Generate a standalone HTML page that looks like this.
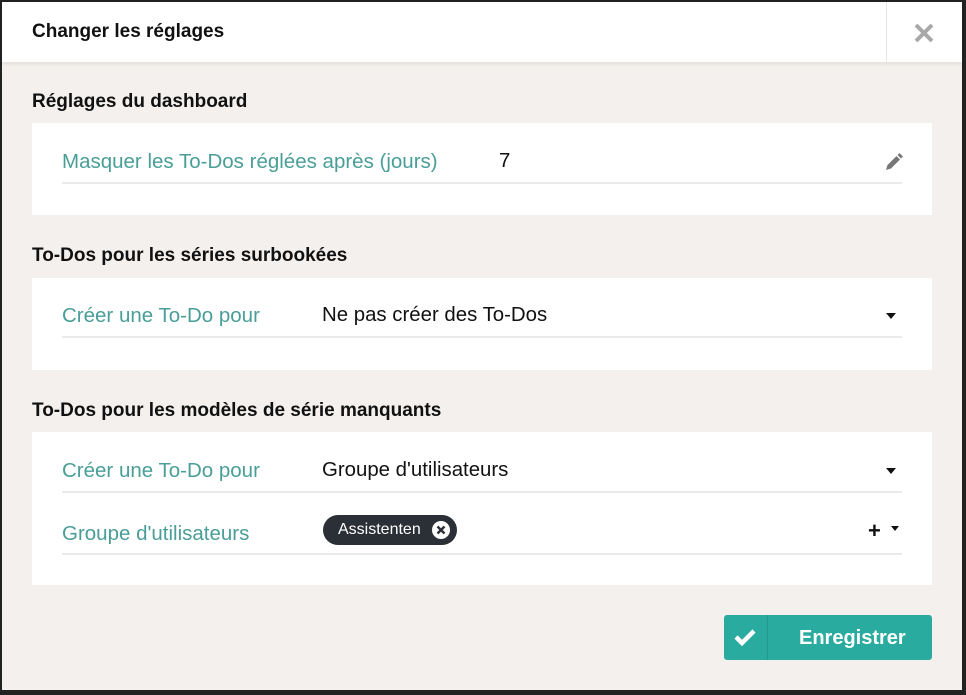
<!DOCTYPE html>
<html><head><meta charset="utf-8"><style>
body{margin:0;width:966px;height:695px;background:#222;font-family:"Liberation Sans",sans-serif;position:relative;overflow:hidden}
.m{position:absolute;left:2px;top:2px;width:960px;height:688px;background:#f4f0ed}
.hd{position:absolute;left:0;top:0;width:960px;height:60px;background:#fff;box-shadow:0 2px 4px rgba(0,0,0,.08)}
.a{position:absolute}
.t{font-size:19px;color:#111;font-weight:bold}
.card{position:absolute;left:30px;width:900px;background:#fff}
.lab{position:absolute;font-size:20.5px;color:#4a9e98}
.ln{position:absolute;height:2px;background:#eceae8}
.val{position:absolute;font-size:20.4px;color:#111}
.car{position:absolute;width:0;height:0;border-left:5px solid transparent;border-right:5px solid transparent;border-top:6px solid #111}
</style></head><body>
<div class="m">
<div class="hd">
<div class="a t" style="left:30px;top:19px">Changer les réglages</div>
<div class="a" style="left:884px;top:0;width:1px;height:60px;background:#e6e6e6"></div>
<svg class="a" style="left:911px;top:20px" width="22" height="22" viewBox="0 0 22 22"><path d="M3 3L19 19M19 3L3 19" stroke="#a8a8a8" stroke-width="4"/></svg>
</div>
<div class="a t" style="left:30px;top:89px">Réglages du dashboard</div>
<div class="card" style="top:121px;height:92px">
<div class="lab" style="left:30px;top:27px">Masquer les To-Dos réglées après (jours)</div>
<div class="ln" style="left:30px;top:59px;width:840px"></div>
<div class="val" style="left:467px;top:27px">7</div>
<svg class="a" style="left:852px;top:29px" width="20" height="20" viewBox="0 0 20 20"><path d="M2 18l1.5-5 9-9 3.5 3.5-9 9z M13.5 3l2-2 3.5 3.5-2 2z" fill="#777"/></svg>
</div>
<div class="a t" style="left:30px;top:243px">To-Dos pour les séries surbookées</div>
<div class="card" style="top:276px;height:92px">
<div class="lab" style="left:30px;top:26px">Créer une To-Do pour</div>
<div class="ln" style="left:30px;top:58px;width:840px"></div>
<div class="val" style="left:290px;top:26px">Ne pas créer des To-Dos</div>
<div class="car" style="left:854px;top:35px"></div>
</div>
<div class="a t" style="left:30px;top:398px">To-Dos pour les modèles de série manquants</div>
<div class="card" style="top:430px;height:153px">
<div class="lab" style="left:30px;top:27px">Créer une To-Do pour</div>
<div class="ln" style="left:30px;top:59px;width:840px"></div>
<div class="val" style="left:290px;top:27px">Groupe d'utilisateurs</div>
<div class="car" style="left:854px;top:36px"></div>
<div class="lab" style="left:30px;top:90px">Groupe d'utilisateurs</div>
<div class="ln" style="left:30px;top:121px;width:840px"></div>
<div class="a" style="left:291px;top:83px;width:134px;height:30px;border-radius:15px;background:#2b2f36;color:#fff;font-size:16px;line-height:30px"><span style="margin-left:15px">Assistenten</span>
<svg class="a" style="left:109px;top:6px" width="18" height="18" viewBox="0 0 18 18"><circle cx="9" cy="9" r="9" fill="#fff"/><path d="M5.5 5.5l7 7M12.5 5.5l-7 7" stroke="#2b2f36" stroke-width="2.4"/></svg></div>
<div class="a" style="left:836px;top:86px;font-size:22px;font-weight:bold;color:#111">+</div>
<div class="car" style="left:859px;top:94px;border-left-width:4px;border-right-width:4px;border-top-width:5px"></div>
</div>
<div class="a" style="left:722px;top:613px;width:208px;height:45px;background:#2aaba0;border-radius:3px">
<div class="a" style="left:43px;top:0;width:1px;height:45px;background:#239a90"></div>
<svg class="a" style="left:10px;top:13px" width="22" height="18" viewBox="0 0 22 18"><path d="M2 9l6 6L20 3" stroke="#fff" stroke-width="4.5" fill="none"/></svg>
<div class="a" style="left:75px;top:12px;color:#fff;font-size:20px;font-weight:bold">Enregistrer</div>
</div>
</div>
</body></html>
